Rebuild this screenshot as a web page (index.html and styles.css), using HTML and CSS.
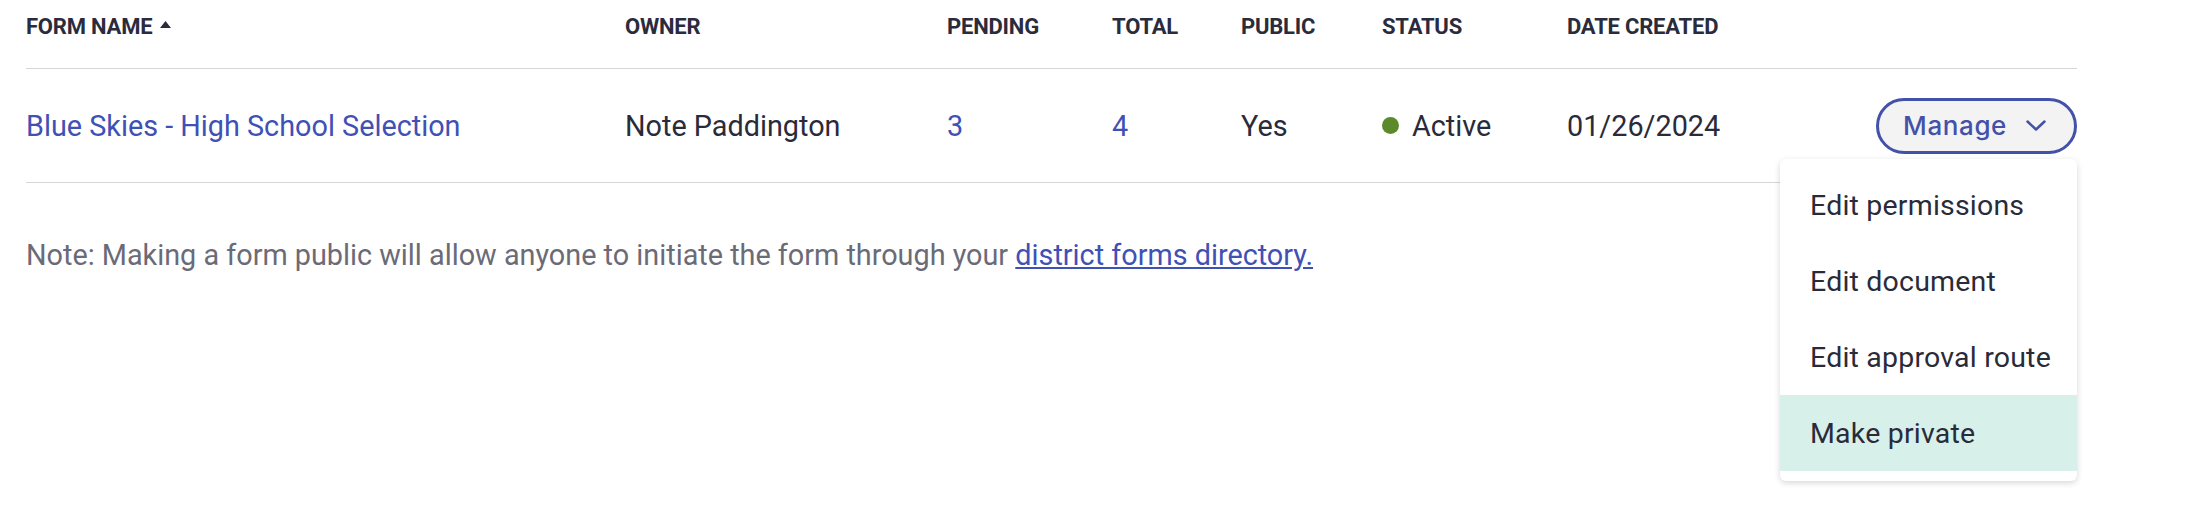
FILE: index.html
```html
<!DOCTYPE html>
<html lang="en">
<head>
    <meta charset="UTF-8">
    <meta name="viewport" content="width=device-width, initial-scale=1.0">
    <title>District Forms</title>
    <link rel="stylesheet" href="styles.css">
</head>
<body>

    <div class="forms">
        <div class="forms-table">
            <div class="row head">
                <div class="cell">
                    Form Name
                    <svg class="sort-icon" width="11" height="7" viewBox="0 0 11 7"><polygon points="5.5,0 11,7 0,7" fill="#2a2b3d"/></svg>
                </div>
                <div class="cell">Owner</div>
                <div class="cell">Pending</div>
                <div class="cell">Total</div>
                <div class="cell">Public</div>
                <div class="cell">Status</div>
                <div class="cell">Date Created</div>
                <div class="cell"></div>
            </div>

            <div class="row item">
                <div class="cell"><a href="#" class="link">Blue Skies - High School Selection</a></div>
                <div class="cell">Note Paddington</div>
                <div class="cell"><a href="#" class="link">3</a></div>
                <div class="cell"><a href="#" class="link">4</a></div>
                <div class="cell">Yes</div>
                <div class="cell"><span class="status-dot"></span>Active</div>
                <div class="cell">01/26/2024</div>
                <div class="cell actions">
                    <button class="manage-btn">
                        Manage
                        <svg width="20" height="11" viewBox="0 0 20 11"><polyline points="1.5,1.5 10,9.5 18.5,1.5" fill="none" stroke="#4351a8" stroke-width="2.5" stroke-linecap="round" stroke-linejoin="round"/></svg>
                    </button>
                    <!-- open dropdown -->
                    <ul class="menu">
                        <li>Edit permissions</li>
                        <li>Edit document</li>
                        <li>Edit approval route</li>
                        <li class="active">Make private</li>
                    </ul>
                </div>
            </div>
        </div>

        <p class="note">Note: Making a form public will allow anyone to initiate the form through your <a href="#" class="note-link">district forms directory.</a></p>
    </div>

</body>
</html>
```

FILE: styles.css
```css
/* General page styles */
body {
    margin: 0;
    padding: 0;
    background-color: #fff;
    color: #2a2b3a;
    font-family: Roboto, "Liberation Sans", sans-serif;
}
.forms {
    padding-left: 26px;
    min-height: 520px;
}
/* Table layout */
.forms-table {
    width: 2051px;
}
.row {
    display: grid;
    grid-template-columns: 599px 322px 165px 129px 141px 185px 1fr auto;
    align-items: center;
    border-bottom: 1px solid #d6d6da;
}
.row.head {
    height: 69px;
    box-sizing: border-box;
    padding-bottom: 16px;
    font-size: 22px;
    font-weight: 700;
    letter-spacing: -0.2px;
    text-transform: uppercase;
    color: #2a2b3d;
}
.row.item {
    height: 114px;
    box-sizing: border-box;
    font-size: 28.8px;
    line-height: 32px;
}
.cell {
    display: flex;
    align-items: center;
}
.sort-icon {
    margin-left: 8px;
    margin-top: -4px;
}
.link {
    color: #3f51b5;
    text-decoration: none;
}
.status-dot {
    width: 17px;
    height: 17px;
    border-radius: 50%;
    background-color: #5b8a2b;
    margin: 0 13px 0 0;
}
/* Manage button and its menu */
.actions {
    position: relative;
    justify-content: flex-end;
}
.manage-btn {
    display: flex;
    align-items: center;
    gap: 19px;
    height: 56px;
    padding: 0 28px 0 24px;
    border: 3px solid #4351a8;
    border-radius: 28px;
    background-color: #f3f3f4;
    color: #4351a8;
    font-family: Inter, sans-serif;
    font-size: 26px;
    font-weight: 500;
    letter-spacing: 0.6px;
    cursor: pointer;
}
.menu {
    position: absolute;
    top: 61px;
    right: 0;
    width: 297px;
    margin: 0;
    padding: 8px 0 10px;
    list-style: none;
    background-color: #fff;
    border-radius: 6px;
    box-shadow: 0 2px 6px rgba(0, 0, 0, 0.16);
    z-index: 2;
}
.menu li {
    height: 76px;
    display: flex;
    align-items: center;
    padding: 3px 0 0 30px;
    box-sizing: border-box;
    font-size: 28.5px;
    letter-spacing: 0.2px;
    color: #2a2b3a;
}
.menu li.active {
    background-color: #d8f0ea;
}
/* Note under the table */
.note {
    margin: 55px 0 0;
    font-size: 28.8px;
    color: #6b6b78;
}
.note-link {
    color: #3f51b5;
}
```
